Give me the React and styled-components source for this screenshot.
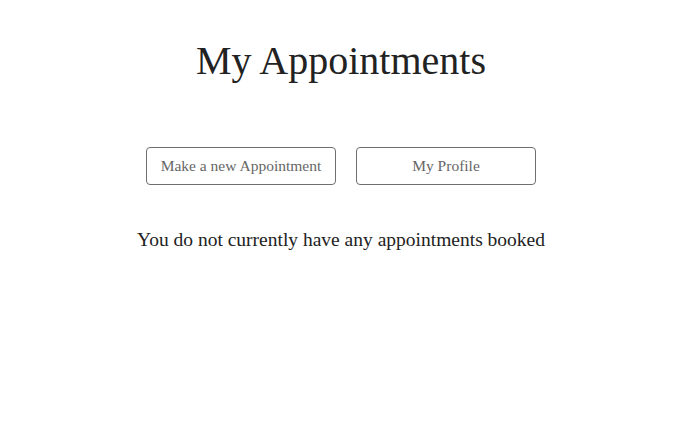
import styled, { createGlobalStyle } from 'styled-components';

const GlobalStyle = createGlobalStyle`
  body {
    margin: 0;
    background: #fff;
    font-family: "Liberation Serif", "Times New Roman", serif;
    color: #222;
  }
`;

const Page = styled.main`
  display: flex;
  flex-direction: column;
  align-items: center;
  padding: 38px 16px 0 0;
`;

const Title = styled.h1`
  margin: 0;
  font-size: 40px;
  font-weight: 400;
  line-height: 46px;
  color: #222;
`;

const Actions = styled.div`
  display: flex;
  gap: 20px;
  margin-top: 63px;
`;

const Button = styled.button`
  width: ${({ $width }) => $width}px;
  height: 38px;
  padding: 0;
  background: #fff;
  border: 1px solid #6f6f6f;
  border-radius: 4px;
  font-family: inherit;
  font-size: 15.5px;
  color: #666;
  cursor: pointer;
`;

const Empty = styled.p`
  margin: 43px 0 0;
  font-size: 19.5px;
  line-height: 24px;
  color: #222;
`;

export default function App() {
  return (
    <>
      <GlobalStyle />
      <Page>
        <Title>My Appointments</Title>
        <Actions>
          <Button $width={190}>Make a new Appointment</Button>
          <Button $width={180}>My Profile</Button>
        </Actions>
        <Empty>You do not currently have any appointments booked</Empty>
      </Page>
    </>
  );
}
